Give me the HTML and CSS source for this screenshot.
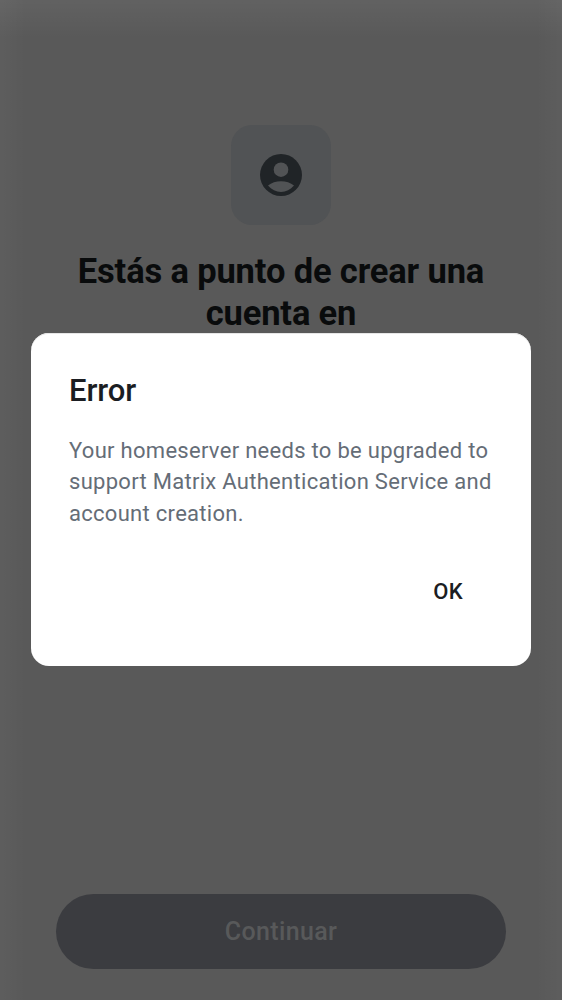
FILE: index.html
```html
<!DOCTYPE html>
<html lang="es">
<head>
<meta charset="utf-8">
<title>Crear cuenta</title>
<link rel="stylesheet" href="styles.css">
</head>
<body>
<div class="screen">
  <header class="intro">
    <div class="badge">
      <svg class="badge-icon" viewBox="0 0 42 42"><circle class="disc" cx="21" cy="21" r="21"/><circle class="person" cx="21" cy="15.7" r="7.3"/><path class="person" d="M8 31.6C11.5 28.7 16 27.2 21 27.2S30.500 28.700 34 31.600C30.500 35.600 26 37.900 21 37.900S11.500 35.600 8 31.600Z"/></svg>
    </div>
    <h1 class="title">Estás a punto de crear una<br>cuenta en</h1>
  </header>
  <button class="continue">Continuar</button>
</div>
<div class="overlay">
  <section class="dialog" role="dialog">
    <h2 class="dialog-title">Error</h2>
    <p class="message">Your homeserver needs to be upgraded to<br>support Matrix Authentication Service and<br>account creation.</p>
    <div class="actions"><button class="ok">OK</button></div>
  </section>
</div>
</body>
</html>
```
FILE: styles.css
```css
* { box-sizing: border-box; }
body { margin: 0; font-family: Roboto, sans-serif; }
button { border: 0; padding: 0; font-family: inherit; }
.screen {
  height: 1000px;
  padding: 125px 56px 31px;
  display: flex;
  flex-direction: column;
  justify-content: space-between;
  background:
    linear-gradient(to bottom, rgba(255, 255, 255, 0.05), transparent 38px),
    linear-gradient(to right, rgba(255, 255, 255, 0.028), transparent 26px),
    linear-gradient(to left, rgba(255, 255, 255, 0.028), transparent 26px),
    #595959;
}
.intro { display: flex; flex-direction: column; align-items: center; }
.badge {
  width: 100px;
  height: 100px;
  border-radius: 21px;
  background: #515355;
  display: grid;
  place-items: center;
}
.badge-icon { width: 42px; height: 42px; }
.disc { fill: #202427; }
.person { fill: #515355; }
.title {
  margin: 25px 0 0;
  font-size: 34.5px;
  line-height: 42px;
  letter-spacing: -0.15px;
  font-weight: 700;
  text-align: center;
  white-space: nowrap;
  color: #090b0c;
}
.continue {
  height: 75px;
  border-radius: 38px;
  background: #3b3c40;
  color: #58595a;
  font-size: 25px;
  letter-spacing: 0.35px;
  font-weight: 500;
}
.overlay { position: absolute; inset: 0; padding: 333px 31px 0; }
.dialog {
  height: 333px;
  border-radius: 18px;
  padding: 38px 38px 37px;
  background: #fff;
  box-shadow: inset 0 1px 0 #e6e6e6;
}
.dialog-title { margin: 0; font-size: 31px; line-height: 40px; letter-spacing: -0.1px; font-weight: 500; color: #1b1d22; }
.message {
  margin: 24px 0 0;
  font-size: 22px;
  line-height: 31.25px;
  letter-spacing: 0.29px;
  white-space: nowrap;
  color: #656d77;
}
.actions { display: flex; justify-content: flex-end; padding: 47px 30px 0 0; }
.ok { background: none; font-size: 22px; line-height: 32px; letter-spacing: 0.3px; font-weight: 500; color: #1b1d22; }
```
